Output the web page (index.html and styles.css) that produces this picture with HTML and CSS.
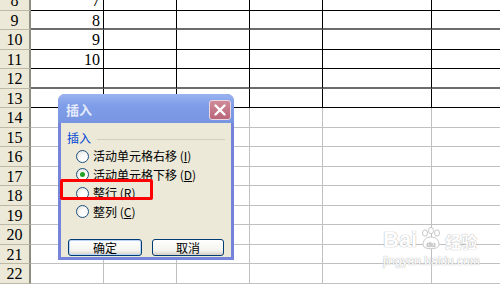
FILE: index.html
```html
<!DOCTYPE html>
<html lang="zh-CN">

<head>
    <meta charset="UTF-8">
    <meta name="viewport" content="width=device-width, initial-scale=1.0">
    <title>插入</title>
    <link rel="stylesheet" href="styles.css">
</head>

<body>
    <div class="sheet">
        <div class="row tbl"><div class="hd">8</div><div class="c num">7</div><div class="c"></div><div class="c"></div><div class="c"></div><div class="c wide"></div><div class="c last"></div></div>
        <div class="row tbl split"><div class="hd">9</div><div class="c num">8</div><div class="c"></div><div class="c"></div><div class="c"></div><div class="c wide"></div><div class="c last"></div></div>
        <div class="row tbl"><div class="hd">10</div><div class="c num">9</div><div class="c"></div><div class="c"></div><div class="c"></div><div class="c wide"></div><div class="c last"></div></div>
        <div class="row tbl"><div class="hd">11</div><div class="c num">10</div><div class="c"></div><div class="c"></div><div class="c"></div><div class="c wide"></div><div class="c last"></div></div>
        <div class="row tbl split"><div class="hd">12</div><div class="c num"></div><div class="c"></div><div class="c"></div><div class="c"></div><div class="c wide"></div><div class="c last"></div></div>
        <div class="row tbl"><div class="hd">13</div><div class="c num"></div><div class="c"></div><div class="c"></div><div class="c"></div><div class="c wide"></div><div class="c last"></div></div>
        <div class="row"><div class="hd">14</div><div class="c"></div><div class="c"></div><div class="c"></div><div class="c"></div><div class="c wide"></div><div class="c last"></div></div>
        <div class="row"><div class="hd">15</div><div class="c"></div><div class="c"></div><div class="c"></div><div class="c"></div><div class="c wide"></div><div class="c last"></div></div>
        <div class="row"><div class="hd">16</div><div class="c"></div><div class="c"></div><div class="c"></div><div class="c"></div><div class="c wide"></div><div class="c last"></div></div>
        <div class="row"><div class="hd">17</div><div class="c"></div><div class="c"></div><div class="c"></div><div class="c"></div><div class="c wide"></div><div class="c last"></div></div>
        <div class="row"><div class="hd">18</div><div class="c"></div><div class="c"></div><div class="c"></div><div class="c"></div><div class="c wide"></div><div class="c last"></div></div>
        <div class="row"><div class="hd">19</div><div class="c"></div><div class="c"></div><div class="c"></div><div class="c"></div><div class="c wide"></div><div class="c last"></div></div>
        <div class="row"><div class="hd">20</div><div class="c"></div><div class="c"></div><div class="c"></div><div class="c"></div><div class="c wide"></div><div class="c last"></div></div>
        <div class="row"><div class="hd">21</div><div class="c"></div><div class="c"></div><div class="c"></div><div class="c"></div><div class="c wide"></div><div class="c last"></div></div>
        <div class="row"><div class="hd">22</div><div class="c"></div><div class="c"></div><div class="c"></div><div class="c"></div><div class="c wide"></div><div class="c last"></div></div>
    </div>

    <!-- insert dialog -->
    <div class="dialog">
        <div class="titlebar">
            <span class="title">插入</span>
            <span class="close">
                <svg width="12" height="12" viewBox="0 0 12 12">
                    <path d="M1.5 1.5 L10.5 10.5 M10.5 1.5 L1.5 10.5" stroke="#fff" stroke-width="2.4" stroke-linecap="round" />
                </svg>
            </span>
        </div>
        <div class="body">
            <div class="group">
                <span class="group-label">插入</span>
                <span class="group-line"></span>
            </div>
            <div class="options">
                <div class="opt"><span class="radio"></span><span>活动单元格右移 (<u>I</u>)</span></div>
                <div class="opt"><span class="radio on"></span><span>活动单元格下移 (<u>D</u>)</span></div>
                <div class="opt"><span class="radio"></span><span>整行 (<u>R</u>)</span></div>
                <div class="opt"><span class="radio"></span><span>整列 (<u>C</u>)</span></div>
            </div>
            <div class="buttons">
                <button class="btn ok">确定</button>
                <button class="btn">取消</button>
            </div>
        </div>
    </div>

    <div class="mark"></div>

    <div class="watermark">
        <div class="wm-top">
            <span class="wm-bai">Bai</span>
            <svg class="paw" width="26" height="26" viewBox="0 0 26 26">
                <g fill="#fff" stroke="#c8c8c8" stroke-width="1">
                    <ellipse cx="7" cy="7" rx="2.5" ry="3.2" />
                    <ellipse cx="13" cy="4.5" rx="2.5" ry="3.2" />
                    <ellipse cx="19" cy="7" rx="2.5" ry="3.2" />
                    <path d="M5 19 C5 13 9 11 13 11 C17 11 21 13 21 19 C21 24 5 24 5 19 Z" />
                </g>
                <text x="13" y="21" font-size="8" text-anchor="middle" fill="#c8c8c8" font-family="Liberation Sans, sans-serif">du</text>
            </svg>
            <span class="wm-jy">经验</span>
        </div>
        <div class="wm-url">jingyan.baidu.com</div>
    </div>
</body>

</html>
```

FILE: styles.css
```css
body {
    margin: 0;
    overflow: hidden;
    background: #fff;
    font-family: "Noto Sans CJK SC", sans-serif;
}

.sheet {
    margin-top: -9px;
}

.row {
    display: flex;
    height: 19.5px;
}

.hd,
.c {
    box-sizing: border-box;
    height: 100%;
    border-bottom: 1px solid #c0c0c0;
    border-right: 1px solid #c0c0c0;
    font-family: "Liberation Serif", serif;
    font-size: 16px;
    line-height: 19px;
}

.hd {
    width: 31px;
    flex-shrink: 0;
    background: #ece9d8;
    border-bottom-color: #bdb9a6;
    border-right: 2px solid #8f8d80;
    text-align: center;
}

.c {
    width: 73px;
    flex-shrink: 0;
}

.c.wide {
    width: 109px;
}

.c.last {
    flex: 1;
    border-right: none;
}

.num {
    text-align: right;
    padding-right: 3px;
}

.tbl .c {
    border-bottom-color: #000;
    border-right-color: #000;
}

.split .c {
    border-bottom: 2px solid #6c6c6c;
}

/* dialog */

.dialog {
    position: absolute;
    left: 58px;
    top: 94px;
    width: 176px;
    height: 166px;
    box-sizing: border-box;
    background: #7584da;
    border-radius: 7px 7px 0 0;
    padding: 0 3px 3px;
    display: flex;
    flex-direction: column;
}

.titlebar {
    height: 29px;
    margin: 0 -3px;
    padding: 0 3px 0 8px;
    border-radius: 7px 7px 0 0;
    background: linear-gradient(#9ab3f0, #7f9de8 40%, #7895e2);
    display: flex;
    align-items: center;
    justify-content: space-between;
}

.title {
    color: #e4ebfb;
    font-size: 13px;
    font-weight: bold;
    margin-top: 1px;
}

.close {
    width: 22px;
    height: 20px;
    box-sizing: border-box;
    margin-top: 3px;
    border: 1px solid #eed6de;
    border-radius: 3px;
    background: linear-gradient(#cf8a99, #b9677a);
    display: flex;
    align-items: center;
    justify-content: center;
}

.body {
    flex: 1;
    background: #ece9d8;
    padding: 6px 6px 0 6px;
    font-size: 12px;
    color: #000;
}

.group {
    display: flex;
    align-items: center;
    gap: 6px;
}

.group-label {
    color: #0046d5;
    font-size: 12px;
    line-height: 18px;
}

.group-line {
    flex: 1;
    height: 1px;
    background: #d0d0bf;
    margin-top: 2px;
}

.options {
    padding-left: 9px;
}

.opt {
    height: 18.5px;
    display: flex;
    align-items: center;
    gap: 4px;
    line-height: 18px;
}

.radio {
    width: 11px;
    height: 11px;
    flex-shrink: 0;
    border: 1px solid #1c5180;
    border-radius: 50%;
    background: radial-gradient(circle at 65% 65%, #fff 30%, #dcdcd4);
    display: flex;
    align-items: center;
    justify-content: center;
}

.radio.on::after {
    content: "";
    width: 5px;
    height: 5px;
    border-radius: 50%;
    background: #21a121;
}

.buttons {
    display: flex;
    gap: 10px;
    padding-left: 1px;
    margin-top: 18px;
}

.btn {
    height: 17px;
    width: 74px;
    padding: 0;
    border: 1px solid #003c74;
    border-radius: 3px;
    background: linear-gradient(#ffffff, #f3f3ee 70%, #d6d0c5);
    font-family: "Noto Sans CJK SC", sans-serif;
    font-size: 12px;
    line-height: 15px;
    color: #000;
}

.btn.ok {
    box-shadow: inset 0 0 0 1px #bcd4f6;
}

.btn + .btn {
    width: 72px;
}

/* red highlight over the row option */
.mark {
    position: absolute;
    left: 60px;
    top: 179px;
    width: 87px;
    height: 15px;
    border: 3px solid #f00;
    border-radius: 2px;
}

.watermark {
    position: absolute;
    left: 383px;
    top: 226px;
    color: #fff;
    text-shadow: 0 0 1px #b5b5b5, 0 0 1px #b5b5b5;
}

.wm-top {
    display: flex;
    align-items: flex-end;
    gap: 1px;
}

.wm-bai {
    font-family: "Liberation Sans", sans-serif;
    font-size: 22px;
    font-weight: bold;
    line-height: 24px;
}

.wm-jy {
    font-size: 16px;
    line-height: 22px;
    font-weight: bold;
}

.wm-url {
    font-family: "Liberation Sans", sans-serif;
    font-size: 12px;
    margin-top: 2px;
}
```
